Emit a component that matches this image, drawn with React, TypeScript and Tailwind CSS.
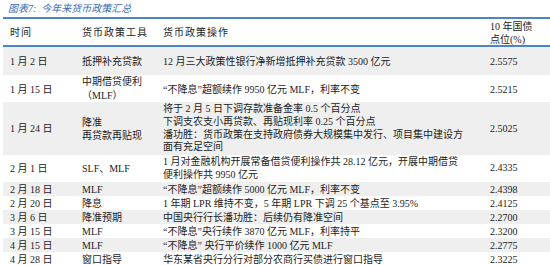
import React from 'react';

type Row = {
  date: string;
  tool: React.ReactNode;
  op: React.ReactNode;
  rate: string;
  h: string;
  gray: boolean;
  rateClass?: string;
};

const rows: Row[] = [
  {
    date: '1 月 2 日',
    tool: '抵押补充贷款',
    op: '12 月三大政策性银行净新增抵押补充贷款 3500 亿元',
    rate: '2.5575',
    h: 'h-[28px]',
    gray: true,
  },
  {
    date: '1 月 15 日',
    tool: (
      <div className="leading-[14px]">
        <div>中期借贷便利</div>
        <div>（MLF）</div>
      </div>
    ),
    op: '“不降息”超额续作 9950 亿元 MLF，利率不变',
    rate: '2.5215',
    h: 'h-[27px]',
    gray: false,
  },
  {
    date: '1 月 24 日',
    tool: (
      <div className="leading-[13px]">
        <div>降准</div>
        <div>再贷款再贴现</div>
      </div>
    ),
    op: (
      <div className="leading-[12.7px]">
        <div>将于 2 月 5 日下调存款准备金率 0.5 个百分点</div>
        <div>下调支农支小再贷款、再贴现利率 0.25 个百分点</div>
        <div>潘功胜：货币政策在支持政府债券大规模集中发行、项目集中建设方</div>
        <div>面有充足空间</div>
      </div>
    ),
    rate: '2.5025',
    h: 'h-[53px]',
    gray: true,
  },
  {
    date: '2 月 1 日',
    tool: 'SLF、MLF',
    op: (
      <div className="leading-[12.5px]">
        <div>1 月对金融机构开展常备借贷便利操作共 28.12 亿元，开展中期借贷</div>
        <div>便利操作共 9950 亿元</div>
      </div>
    ),
    rate: '2.4335',
    h: 'h-[27px]',
    gray: false,
    rateClass: 'pb-[2px]',
  },
  { date: '2 月 18 日', tool: 'MLF', op: '“不降息”超额续作 5000 亿元 MLF，利率不变', rate: '2.4398', h: 'h-[14px]', gray: true },
  { date: '2 月 20 日', tool: '降息', op: '1 年期 LPR 维持不变，5 年期 LPR 下调 25 个基点至 3.95%', rate: '2.4125', h: 'h-[14px]', gray: false },
  { date: '3 月 6 日', tool: '降准预期', op: '中国央行行长潘功胜：后续仍有降准空间', rate: '2.2700', h: 'h-[14px]', gray: true },
  { date: '3 月 15 日', tool: 'MLF', op: '“不降息”央行续作 3870 亿元 MLF，利率持平', rate: '2.3200', h: 'h-[14px]', gray: false },
  { date: '4 月 15 日', tool: 'MLF', op: '“不降息” 央行平价续作 1000 亿元 MLF', rate: '2.2775', h: 'h-[14px]', gray: true },
  { date: '4 月 28 日', tool: '窗口指导', op: '华东某省央行分行对部分农商行买债进行窗口指导', rate: '2.3225', h: 'h-[13px]', gray: false },
];

const grid = 'grid grid-cols-[79px_81px_327px_1fr] items-center';

export default function App() {
  return (
    <div
      className="w-[550px] h-[265px] overflow-hidden bg-white text-[10px] text-[#1c1c1c]"
      style={{ fontFamily: "'Liberation Serif', 'Noto Sans CJK SC', serif" }}
    >
      <div className="h-[17px] pl-[8px] pt-[3px] text-[10px] italic leading-[12px] text-[#3a6ab3]">
        <span>图表7:</span>
        <span className="ml-[5px]">今年来货币政策汇总</span>
      </div>
      <div className="ml-[3px]">
        <div className="h-[2px] bg-[#4d84c6]" />
        <div className={`${grid} h-[26px]`}>
          <div className="pl-[7px] tracking-[1px]">时间</div>
          <div className="tracking-[1px]">货币政策工具</div>
          <div className="tracking-[1px]">货币政策操作</div>
          <div className="leading-[13px] pt-[1px]">
            <div>10 年国债</div>
            <div>点位(%)</div>
          </div>
        </div>
        <div className="h-[2px] bg-[#4d84c6]" />
        {rows.map((r) => (
          <div key={r.date} className={`${grid} ${r.h} ${r.gray ? 'bg-[#efefef]' : 'bg-white'}`}>
            <div className="pl-[7px]">{r.date}</div>
            <div>{r.tool}</div>
            <div className="whitespace-nowrap">{r.op}</div>
            <div className={r.rateClass}>{r.rate}</div>
          </div>
        ))}
      </div>
    </div>
  );
}
